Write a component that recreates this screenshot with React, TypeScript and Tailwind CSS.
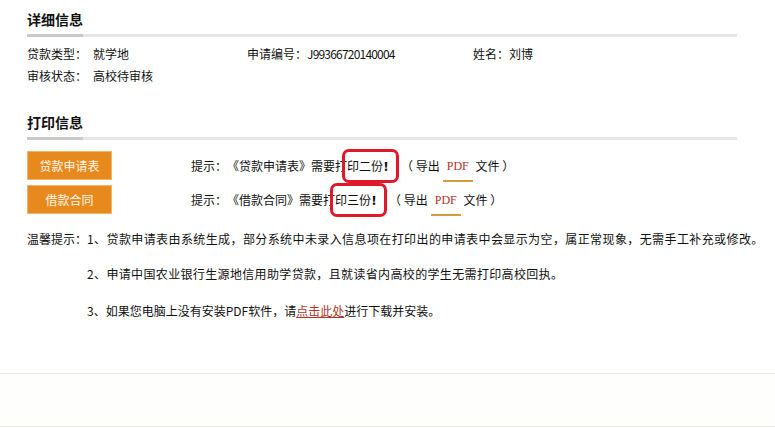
import React from 'react';

const FONT = "font-['SimSun','Noto_Sans_CJK_SC',sans-serif]";

function SectionTitle({ title }: { title: string }) {
  return (
    <div>
      <h2 className="text-[14px] font-bold leading-[16px] text-[#111]">{title}</h2>
      <div className="mt-[7px] flex h-[3px] w-[710px] bg-[#e6e6e6]">
        <div className="w-[56px] bg-[#c9c9c9]" />
      </div>
    </div>
  );
}

const PRINTS = [
  { button: '贷款申请表', doc: '《贷款申请表》', copies: '印二份' },
  { button: '借款合同', doc: '《借款合同》', copies: '印三份' },
];

const TIPS = [
  '贷款申请表由系统生成，部分系统中未录入信息项在打印出的申请表中会显示为空，属正常现象，无需手工补充或修改。',
  '申请中国农业银行生源地信用助学贷款，且就读省内高校的学生无需打印高校回执。',
];

export default function App() {
  return (
    <div className={`h-[428px] w-[775px] overflow-hidden bg-white text-[12px] leading-[20px] text-[#111] ${FONT}`}>
      <div className="px-[27px] pt-[11px]">
        <SectionTitle title="详细信息" />

        <div className="mt-[7px] flex">
          <div className="flex w-[220px]">
            <span className="w-[66px]">贷款类型：</span>
            <span>就学地</span>
          </div>
          <div className="flex w-[226px]">
            <span>申请编号：</span>
            <span className="tracking-[-0.8px]">J99366720140004</span>
          </div>
          <div className="flex">
            <span>姓名：</span>
            <span>刘博</span>
          </div>
        </div>
        <div className="mt-[2px] flex">
          <span className="w-[66px]">审核状态：</span>
          <span>高校待审核</span>
        </div>

        <div className="mt-[28px]">
          <SectionTitle title="打印信息" />
        </div>

        <div className="mt-[11px] flex flex-col gap-[5px]">
          {PRINTS.map((p) => (
            <div key={p.button} className="flex items-center">
              <button className="h-[29px] w-[85px] border border-[#f1b469] bg-[#e8891d] text-[12px] text-[#fff8ec]">
                {p.button}
              </button>
              <div className="ml-[79px] flex items-center whitespace-pre">
                <span>提示：</span>
                <span>{p.doc}需要打</span>
                <span className="relative">
                  {p.copies}<b className="font-black">！</b>
                  <span className="pointer-events-none absolute -bottom-[7px] -left-[5px] -right-[4px] -top-[7px] rounded-[7px] border-[3px] border-[#e0182a]" />
                </span>
                <span className="ml-[6px]">（ 导出</span>
                <span className="relative ml-[3px] px-[4px] font-['Liberation_Serif',serif] text-[12px] text-[#b8302a]">
                  PDF
                  <span className="absolute -bottom-[6px] left-0 right-0 h-[2px] bg-[#d59b3f]" />
                </span>
                <span> 文件 ）</span>
              </div>
            </div>
          ))}
        </div>

        <div className="mt-[15px]">
          <div className="flex whitespace-nowrap">
            <span className="shrink-0">温馨提示：</span>
            <span className="tracking-[0.4px]">1、{TIPS[0]}</span>
          </div>
          <div className="mt-[15px] pl-[60px] tracking-[0.35px]">2、{TIPS[1]}</div>
          <div className="mt-[17px] pl-[60px]">
            3、如果您电脑上没有安装PDF软件，请
            <a className="text-[#b2352a] underline">点击此处</a>
            进行下载并安装。
          </div>
        </div>
      </div>

      <div className="mt-[52px] h-[54px] border-b border-t border-b-[#ebebdf] border-t-[#e9e9e9] bg-[#fefefd]" />
    </div>
  );
}
